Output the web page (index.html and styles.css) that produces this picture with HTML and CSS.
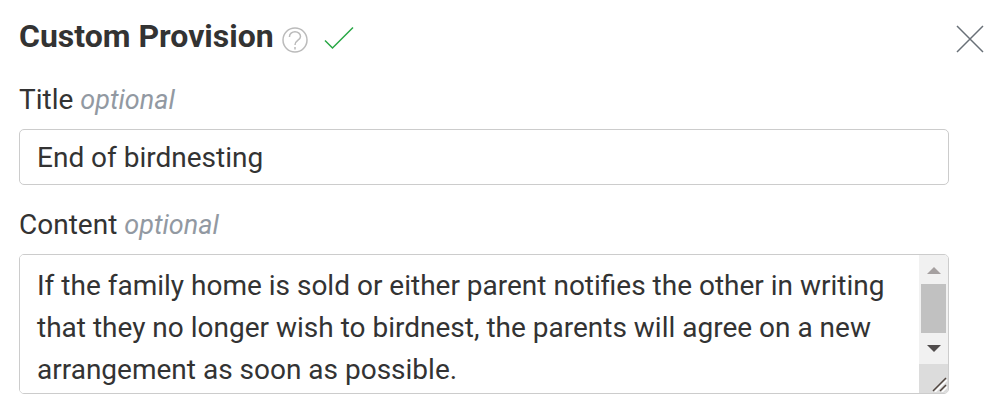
FILE: index.html
```
<!DOCTYPE html>
<html lang="en">
<head>
  <meta charset="UTF-8" />
  <title>Custom Provision</title>
  <link rel="stylesheet" href="styles.css">
</head>
<body>

  <form class="provision">
    <div class="provision-main">
      <div class="provision-header">
        <h2>Custom Provision</h2>
        <button type="button" class="icon-btn help" aria-label="Help">
          <svg width="26" height="26" viewBox="0 0 26 26" stroke-width="1.5">
            <circle cx="13" cy="13" r="12" />
            <path d="M7.500 10V9.500a5.500 4.800 0 0 1 11 0c0 4-5.500 3.500-5.500 8.500M13 20v2.500" />
          </svg>
        </button>
        <svg class="check" width="30" height="24" viewBox="0 0 30 24" stroke-width="1.5">
          <path d="M1 14.500L8.500 22L29 1.500" />
        </svg>
      </div>

      <label for="title">Title <em>optional</em></label>
      <input type="text" id="title" value="End of birdnesting" />

      <label for="content">Content <em>optional</em></label>
      <div class="textarea-box">
        <textarea id="content">If the family home is sold or either parent notifies the other in writing that they no longer wish to birdnest, the parents will agree on a new arrangement as soon as possible.</textarea>
        <div class="scrollbar">
          <svg class="arrow arrow-up" width="14" height="7" viewBox="0 0 14 7"><path d="M0 7L7 0L14 7Z" /></svg>
          <div class="thumb"></div>
          <svg class="arrow" width="14" height="7" viewBox="0 0 14 7"><path d="M0 0L7 7L14 0Z" /></svg>
          <div class="resizer">
            <svg width="16" height="16" viewBox="0 0 16 16" stroke-width="1.5">
              <path class="grip-light" d="M4 16L16 4M11 16L16 11" />
              <path d="M2 15L15 2M9 15L15 9" />
            </svg>
          </div>
        </div>
      </div>
    </div>

    <button type="button" class="icon-btn close" aria-label="Close">
      <svg width="28" height="28" viewBox="0 0 28 28" stroke-width="1.5">
        <path d="M1 1L27 27M27 1L1 27" />
      </svg>
    </button>
  </form>

</body>
</html>
```

FILE: styles.css
```
* {
  box-sizing: border-box;
}

body {
  margin: 0;
  font-family: Roboto, "Liberation Sans", sans-serif;
  font-size: 28px;
  color: #333;
  background: #fff;
}

.provision {
  display: flex;
  align-items: flex-start;
  gap: 7px;
  padding: 16px 19px 18px 19px;
}

.provision-main {
  flex: 1;
  min-width: 0;
}

/* Heading row */
.provision-header {
  display: flex;
  align-items: center;
  height: 40px;
  margin-bottom: 24px;
}

h2 {
  margin: 0;
  font-size: 32px;
  line-height: 40px;
}

svg {
  display: block;
  fill: none;
}

.icon-btn {
  padding: 0;
  border: none;
  background: none;
  cursor: pointer;
}

.help {
  margin: 8px 16px 0 8px;
  stroke: #bbb;
}

.check {
  margin-top: 4px;
  stroke: #28a745;
}

.close {
  margin-top: 9px;
  stroke: #697077;
}

/* Fields */
label {
  display: block;
  margin-bottom: 9px;
  line-height: 40px;
}

label em {
  font-size: 27px;
  color: #9299a2;
}

input,
.textarea-box {
  width: 100%;
  border: 1px solid #ccc;
  border-radius: 5px;
}

input,
textarea {
  font: inherit;
  color: inherit;
  background: #fff;
}

input {
  display: block;
  height: 56px;
  margin-bottom: 20px;
  padding: 0 17px;
}

.textarea-box {
  display: flex;
  height: 140px;
  overflow: hidden;
}

textarea {
  flex: 1;
  min-width: 0;
  padding: 10px 17px 0;
  border: none;
  outline: none;
  resize: none;
  overflow: hidden;
  line-height: 42px;
}

/* Scrollbar of the content box */
.scrollbar {
  display: flex;
  flex-direction: column;
  align-items: center;
  width: 29px;
  background: #f1f1f1;
}

.arrow {
  margin: 12px 0;
  fill: #504c4c;
}

.arrow-up {
  margin: 12px 0 10px;
  fill: #a5a0a0;
}

.thumb {
  width: 25px;
  height: 49px;
  background: #c1c1c1;
}

.resizer {
  display: flex;
  justify-content: flex-end;
  align-items: flex-end;
  width: 100%;
  flex: 1;
  padding: 0 1px 1px 0;
  background: #dcdcdc;
  stroke: #50453f;
}

.grip-light {
  stroke: #fff;
}
```
